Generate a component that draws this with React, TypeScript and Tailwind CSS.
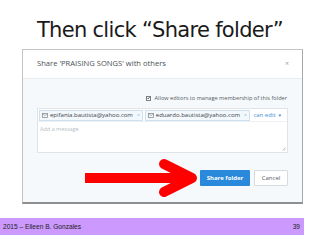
import React from "react";

const Mail = () => (
  <svg width="6" height="5" viewBox="0 0 6 5" className="shrink-0">
    <rect x="0.5" y="0.5" width="5" height="4" fill="none" stroke="#8a8f94" strokeWidth="0.8" />
    <path d="M0.5 0.8 L3 2.6 L5.5 0.8" fill="none" stroke="#8a8f94" strokeWidth="0.6" />
  </svg>
);

function Chip({ email }: { email: string }) {
  return (
    <div className="flex items-center gap-[2px] h-[11px] px-[2px] border border-[#cfe0ef] bg-[#f3f8fc] text-[6px] text-[#3d4349] leading-none">
      <Mail />
      <span>{email}</span>
      <span className="text-[#8db3d6] text-[5px] ml-[2px]">×</span>
    </div>
  );
}

export default function App() {
  return (
    <div className="w-[320px] h-[240px] bg-white flex flex-col overflow-hidden relative">
      {/* Title */}
      <div className="h-[49px] flex items-center justify-center">
        <h1 className="text-[21px] text-[#1a1a1a] leading-none pt-[12px]" style={{ fontFamily: '"DejaVu Sans", sans-serif', letterSpacing: "-0.7px" }}>
          Then click “Share folder”
        </h1>
      </div>

      {/* Screenshot frame */}
      <div
        className="ml-[22px] w-[281px] h-[155px] flex flex-col border-t border-l border-[#c4c4c4] border-r border-r-[#a8a8a8] border-b-2 border-b-[#8f8f8f] relative"
        style={{ fontFamily: '"Open Sans", sans-serif' }}
      >
        <div className="h-[29px] bg-white border-b border-[#e8ecef] flex items-center justify-between pl-[14px] pr-[13px]">
          <span className="text-[7.6px] text-[#4a4f55]">Share 'PRAISING SONGS' with others</span>
          <span className="text-[7px] text-[#9aa0a6]">×</span>
        </div>

        <div className="flex-1 bg-[#f5f9fc] px-[14px] pt-[14px] flex flex-col">
          <div className="h-[10px] flex items-center justify-end gap-[4px] pr-[1px]">
            <span className="w-[5px] h-[5px] border border-[#7a7f85] bg-white flex items-center justify-center">
              <svg width="4" height="4" viewBox="0 0 4 4">
                <path d="M0.5 2 L1.6 3.2 L3.6 0.6" fill="none" stroke="#333" strokeWidth="0.9" />
              </svg>
            </span>
            <span className="text-[5.6px] text-[#555b61]">Allow editors to manage membership of this folder</span>
          </div>

          <div className="mt-[5px] h-[45px] bg-white border border-[#dfe4e8] flex flex-col relative">
            <div className="h-[13px] flex items-center pl-[1px] pr-[5px] gap-[2px] border-b border-[#eef1f3]">
              <Chip email="epifania.bautista@yahoo.com" />
              <Chip email="eduardo.bautista@yahoo.com" />
              <span className="ml-auto text-[6px] text-[#3f8fd8] flex items-center gap-[2px]">
                can edit <span className="text-[4.5px]">▼</span>
              </span>
            </div>
            <span className="pl-[2px] pt-[3px] text-[5.5px] text-[#b8bdc2]">Add a message</span>
            <svg width="4" height="4" viewBox="0 0 4 4" className="absolute right-[1px] bottom-[1px]">
              <path d="M0.5 3.5 L3.5 0.5 M2 3.5 L3.5 2" stroke="#a0a4a8" strokeWidth="0.6" />
            </svg>
          </div>

          <div className="mt-[17px] flex justify-end gap-[4px]">
            <div className="w-[50px] h-[16px] bg-[#2a89db] rounded-[1px] flex items-center justify-center text-[6px] font-bold text-white">
              Share folder
            </div>
            <div className="w-[34px] h-[16px] bg-white border border-[#d6dbe0] rounded-[1px] flex items-center justify-center text-[6px] text-[#555b61]">
              Cancel
            </div>
          </div>
        </div>

        {/* red arrow annotation */}
        <svg width="120" height="44" viewBox="0 0 120 44" className="absolute left-[61px] top-[106px]">
          <rect x="1" y="17" width="100" height="10" fill="#ff0000" />
          <polyline points="80,8 108,22 80,36" fill="none" stroke="#ff0000" strokeWidth="10" strokeLinecap="round" strokeLinejoin="round" />
        </svg>
      </div>

      {/* Footer */}
      <div
        className="mt-[14px] w-[304px] h-[17px] bg-[#cc99ff] flex items-center justify-between pl-[3px] pr-[4px] text-[6.6px] text-[#222]"
        style={{ fontFamily: '"Liberation Sans", Arial, sans-serif' }}
      >
        <span>2015 – Eileen B. Gonzales</span>
        <span>39</span>
      </div>
    </div>
  );
}
